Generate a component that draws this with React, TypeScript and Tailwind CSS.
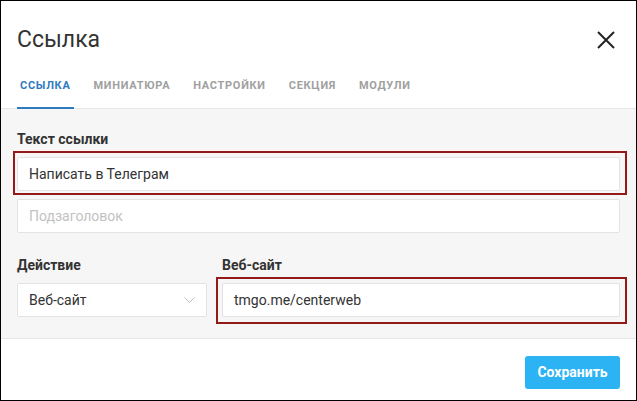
import React from "react";

const tabs = ["ССЫЛКА", "МИНИАТЮРА", "НАСТРОЙКИ", "СЕКЦИЯ", "МОДУЛИ"];

function Field({ children, className = "" }: { children: React.ReactNode; className?: string }) {
  return (
    <div
      className={`h-[34px] bg-white border border-[#e3e3e3] rounded-[2px] flex items-center pl-[11px] pr-[10px] text-[14px] ${className}`}
    >
      {children}
    </div>
  );
}

export default function App() {
  return (
    <div
      className="w-[637px] h-[401px] border border-black bg-white flex flex-col text-[#333]"
      style={{ fontFamily: "Roboto, 'Noto Sans', Arial, sans-serif" }}
    >
      {/* Header */}
      <div className="pt-[26px] pl-4 pr-[21px] flex items-center justify-between">
        <h1 className="text-[23px] leading-[26px] font-normal text-[#333]">Ссылка</h1>
        <svg width="18" height="18" viewBox="0 0 18 18" className="text-[#222]">
          <path d="M1 1L17 17M17 1L1 17" stroke="currentColor" strokeWidth="2" />
        </svg>
      </div>

      {/* Tabs */}
      <nav className="flex gap-[17px] pl-4 border-b border-[#e6e6e6]">
        {tabs.map((t, i) => (
          <div
            key={t}
            className={`px-[3px] pt-[26px] pb-[14px] leading-[14px] text-[11px] font-bold tracking-[0.7px] border-b-2 -mb-px ${
              i === 0 ? "border-[#2f7bbf] text-[#2f7bbf]" : "border-transparent text-[#a0a0a0]"
            }`}
          >
            {t}
          </div>
        ))}
      </nav>

      {/* Body */}
      <div className="bg-[#f6f6f6] px-4 pt-[21px] pb-[21px] flex flex-col">
        <div className="text-[14px] leading-[18px] font-bold text-[#333] mb-[9px]">Текст ссылки</div>
        <div className="relative">
          <Field>Написать в Телеграм</Field>
          <div className="absolute -left-[4px] -right-[7px] -top-[6px] -bottom-[4px] border-2 border-[#941a1a] pointer-events-none" />
        </div>
        <Field className="mt-[8px] text-[#c2c2c2]">Подзаголовок</Field>

        <div className="flex gap-[15px] mt-[23px]">
          <div className="w-[190px] flex flex-col">
            <div className="text-[14px] leading-[18px] font-bold text-[#333] mb-[9px]">Действие</div>
            <Field className="justify-between !pr-[11px]">
              <span>Веб-сайт</span>
              <svg width="11" height="6" viewBox="0 0 11 6">
                <path d="M0.5 0.5L5.5 5.5L10.5 0.5" fill="none" stroke="#bdbdbd" strokeWidth="1" />
              </svg>
            </Field>
          </div>
          <div className="flex-1 flex flex-col">
            <div className="text-[14px] leading-[18px] font-bold text-[#333] mb-[9px]">Веб-сайт</div>
            <div className="relative">
              <Field>tmgo.me/centerweb</Field>
              <div className="absolute -left-[6px] -right-[7px] -top-[6px] -bottom-[7px] border-2 border-[#941a1a] pointer-events-none" />
            </div>
          </div>
        </div>
      </div>

      {/* Footer */}
      <div className="flex-1 border-t border-[#e6e6e6] flex justify-end items-start pt-[17px] pr-[16px]">
        <button className="h-[33px] w-[95px] rounded-[3px] bg-[#2bb3f4] text-white text-[14px] font-bold">
          Сохранить
        </button>
      </div>
    </div>
  );
}
